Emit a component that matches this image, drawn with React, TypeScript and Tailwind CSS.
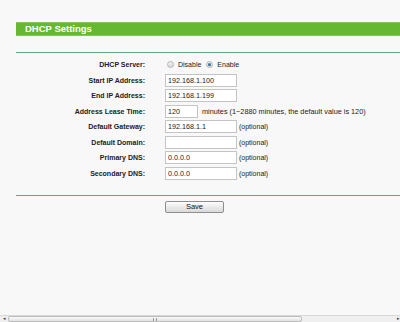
const rows = [
  { label: 'Start IP Address:', value: '192.168.1.100' },
  { label: 'End IP Address:', value: '192.168.1.199' },
  { label: 'Address Lease Time:', value: '120', short: true, note: 'minutes (1~2880 minutes, the default value is 120)' },
  { label: 'Default Gateway:', value: '192.168.1.1', note: '(optional)' },
  { label: 'Default Domain:', value: '', note: '(optional)' },
  { label: 'Primary DNS:', value: '0.0.0.0', note: '(optional)' },
  { label: 'Secondary DNS:', value: '0.0.0.0', note: '(optional)' },
]

function Radio({ checked }: { checked?: boolean }) {
  return (
    <span className="w-[7px] h-[7px] rounded-full border border-[#b5b5b5] bg-gradient-to-b from-[#f4f4f4] to-[#d8d8d8] flex items-center justify-center">
      {checked && <span className="w-[3px] h-[3px] rounded-full bg-[#3a6f9a]" />}
    </span>
  )
}

export default function App() {
  return (
    <div className="w-[400px] h-[322px] bg-[#f8f8f8] flex flex-col font-['Liberation_Sans',Arial,sans-serif] text-[#222] overflow-hidden">
      <div className="flex-1 pt-[22px] pl-[16px]">
        <div className="h-[14px] bg-[#66b832] border-y border-[#7fc75a] flex items-center pl-[9px] text-white font-bold text-[9.5px] leading-none">
          DHCP Settings
        </div>
        <div className="mt-[16px] border-t border-[#62a67f]" />

        <div className="mt-[4px] flex flex-col">
          <div className="flex items-center h-[15.5px]">
            <div className="w-[129px] text-right font-bold text-[7px] leading-none">DHCP Server:</div>
            <div className="ml-[22px] flex items-center text-[7px] leading-none">
              <Radio />
              <span className="ml-[4px]">Disable</span>
              <span className="ml-[5px]"><Radio checked /></span>
              <span className="ml-[4px]">Enable</span>
            </div>
          </div>
          {rows.map((r) => (
            <div key={r.label} className="flex items-center h-[15.5px]">
              <div className="w-[129px] text-right font-bold text-[7px] leading-none">{r.label}</div>
              <div
                className={
                  'ml-[20px] h-[13px] border border-[#c4c4c4] bg-white flex items-center pl-[2px] text-[7.2px] leading-none ' +
                  (r.short ? 'w-[33px]' : 'w-[72px]')
                }
              >
                {r.value}
              </div>
              {r.note && (
                <span className={r.short ? 'ml-[4px] text-[7.3px] leading-none' : 'ml-[2px] text-[7px] leading-none'}>
                  {r.note}
                </span>
              )}
            </div>
          ))}
        </div>

        <div className="mt-[14px] border-t border-[#62a67f]" />
        <div className="mt-[5px] pl-[149px]">
          <button className="w-[59px] h-[12px] rounded-[2px] border border-[#8e8e8e] bg-gradient-to-b from-[#fdfdfd] to-[#d9d9d9] text-[7.5px] leading-none text-[#111] flex items-center justify-center">
            Save
          </button>
        </div>
      </div>

      <div className="h-[7px] flex items-stretch border-t border-[#d8d8d8] bg-[#efefef]">
        <div className="w-[8px] flex items-center justify-center text-[5px] text-[#444]">◂</div>
        <div className="w-[294px] border border-[#bdbdbd] rounded-[2px] bg-gradient-to-b from-[#fafafa] to-[#e2e2e2] flex items-center justify-center">
          <span className="w-[4px] h-[3px] border-x border-[#999]" />
        </div>
        <div className="flex-1" />
        <div className="w-[4px] flex items-center justify-center text-[5px] text-[#444]">▸</div>
      </div>
    </div>
  )
}
